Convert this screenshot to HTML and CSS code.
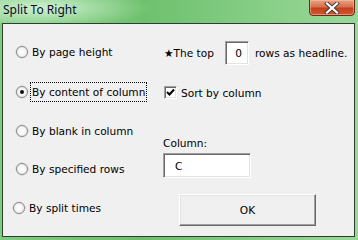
FILE: index.html
```html
<!DOCTYPE html>
<html>
<head>
<meta charset="utf-8">
<link rel="stylesheet" href="styles.css">
</head>
<body>
<div class="window">
  <div class="titlebar">
    <span class="title">Split To Right</span>
    <div class="close">
      <svg width="16" height="12" viewBox="0 0 16 12">
        <path d="M3 1.5 L13 10.5 M13 1.5 L3 10.5" stroke="#3a3a3a" stroke-width="4" stroke-linecap="square"/>
        <path d="M3 1.5 L13 10.5 M13 1.5 L3 10.5" stroke="#ffffff" stroke-width="2.2" stroke-linecap="square"/>
      </svg>
    </div>
  </div>
  <div class="client">
    <div class="left">
      <div class="opt o1"><span class="rb"></span><span class="lbl">By page height</span></div>
      <div class="opt o2"><span class="rb on"></span><span class="lbl focus">By content of column</span></div>
      <div class="opt o3"><span class="rb"></span><span class="lbl">By blank in column</span></div>
      <div class="opt o4"><span class="rb"></span><span class="lbl">By specified rows</span></div>
      <div class="opt o5"><span class="rb"></span><span class="lbl">By split times</span></div>
    </div>
    <div class="right">
      <div class="toprow"><span class="txt">★The top</span><span class="field small">0</span><span class="txt after">rows as headline.</span></div>
      <div class="chkrow">
        <span class="cb"><svg width="11" height="11" viewBox="0 0 11 11"><path d="M2 5 L4.5 7.5 L9 2.5" fill="none" stroke="#000" stroke-width="2"/></svg></span>
        <span class="txt">Sort by column</span>
      </div>
      <div class="collabel">Column:</div>
      <div class="field wide">C</div>
      <div class="btn">OK</div>
    </div>
  </div>
</div>
</body>
</html>
```

FILE: styles.css
```css
html, body {
  margin: 0;
  padding: 0;
  background: #ffffff;
}
.window {
  width: 358px;
  height: 240px;
  box-sizing: border-box;
  background: linear-gradient(90deg, #7fcb7f 0%, #6ec06e 40%, #88cf88 75%, #9ad89a 100%);
  display: flex;
  flex-direction: column;
  font-family: "DejaVu Sans", Verdana, sans-serif;
  font-size: 10.6px;
  color: #000;
}
.titlebar {
  height: 23px;
  position: relative;
  background: radial-gradient(ellipse 110px 22px at 40px 8px, rgba(235,255,235,0.75), rgba(235,255,235,0) 100%);
}
.title {
  position: absolute;
  left: 3px;
  top: 1px;
  font-family: "Noto Sans", "Open Sans", sans-serif;
  font-size: 12px;
  color: #0b0b30;
}
.close {
  position: absolute;
  left: 309px;
  top: -1px;
  width: 44px;
  height: 15px;
  border: 1px solid #6b2a18;
  border-radius: 0 0 4px 4px;
  background: linear-gradient(180deg, #e6a486 0%, #d8704c 45%, #c2401a 55%, #d25a34 100%);
  display: flex;
  align-items: center;
  justify-content: center;
  box-shadow: inset 0 0 0 1px rgba(255,200,170,0.5);
}
.client {
  margin: 0 3px 0 2px;
  height: 214px;
  box-sizing: border-box;
  border: 1px solid #2e3e2e;
  background: #f0f0f0;
  display: flex;
}
.left {
  width: 160px;
  box-sizing: border-box;
  padding: 18px 0 0 13px;
  display: flex;
  flex-direction: column;
}
.opt {
  height: 20px;
  display: flex;
  align-items: center;
}
.o2 { margin-top: 20px; }
.o3 { margin-top: 19px; }
.o4 { margin-top: 18px; }
.o5 { margin-top: 19px; margin-left: -3px; }
.rb {
  width: 10px;
  height: 10px;
  border-radius: 50%;
  border: 1px solid #8b8b8b;
  background: radial-gradient(circle at 50% 50%, #ffffff 0%, #f4f4f4 55%, #d6d6d6 100%);
  box-shadow: 0 0 0 0.5px #c8c8c8;
  position: relative;
  flex: none;
}
.rb.on::after {
  content: "";
  position: absolute;
  left: 3px;
  top: 3px;
  width: 4px;
  height: 4px;
  border-radius: 50%;
  background: #111;
}
.lbl {
  margin-left: 2px;
  padding: 0 1px 0 1px;
  height: 18px;
  line-height: 18px;
  border: 1px dotted transparent;
  white-space: nowrap;
}
.lbl.focus {
  border-color: #000;
}
.right {
  flex: 1;
  padding: 17px 0 0 0;
  display: flex;
  flex-direction: column;
  align-items: flex-start;
}
.toprow {
  display: flex;
  align-items: center;
  height: 24px;
  margin-left: 1px;
  white-space: nowrap;
}
.txt { white-space: nowrap; }
.field {
  box-sizing: border-box;
  background: #fff;
  border-top: 1px solid #a0a0a0;
  border-left: 1px solid #a0a0a0;
  border-bottom: 1px solid #fff;
  border-right: 1px solid #fff;
  box-shadow: inset 1px 1px 0 #696969, inset -1px -1px 0 #e3e3e3;
  display: flex;
  align-items: center;
}
.field.small {
  width: 24px;
  height: 24px;
  margin-left: 11px;
  justify-content: flex-end;
  padding-right: 6px;
}
.after { margin-left: 6px; }
.chkrow {
  margin-top: 21px;
  margin-left: 1px;
  display: flex;
  align-items: center;
  height: 13px;
}
.cb {
  width: 13px;
  height: 13px;
  box-sizing: border-box;
  background: #fff;
  border-top: 1px solid #a0a0a0;
  border-left: 1px solid #a0a0a0;
  border-bottom: 1px solid #fff;
  border-right: 1px solid #fff;
  box-shadow: inset 1px 1px 0 #696969, inset -1px -1px 0 #e3e3e3;
  display: flex;
  align-items: center;
  justify-content: center;
  margin-right: 4px;
}
.collabel {
  margin-top: 38px;
  height: 13px;
  line-height: 13px;
}
.field.wide {
  margin-top: 3px;
  width: 88px;
  height: 25px;
  padding-left: 11px;
}
.btn {
  margin-top: 16px;
  margin-left: 16px;
  width: 137px;
  height: 32px;
  box-sizing: border-box;
  background: #f0f0f0;
  border-top: 1px solid #fff;
  border-left: 1px solid #fff;
  border-bottom: 1px solid #696969;
  border-right: 1px solid #696969;
  box-shadow: inset -1px -1px 0 #a0a0a0, inset 1px 1px 0 #e3e3e3;
  display: flex;
  align-items: center;
  justify-content: center;
}
```
